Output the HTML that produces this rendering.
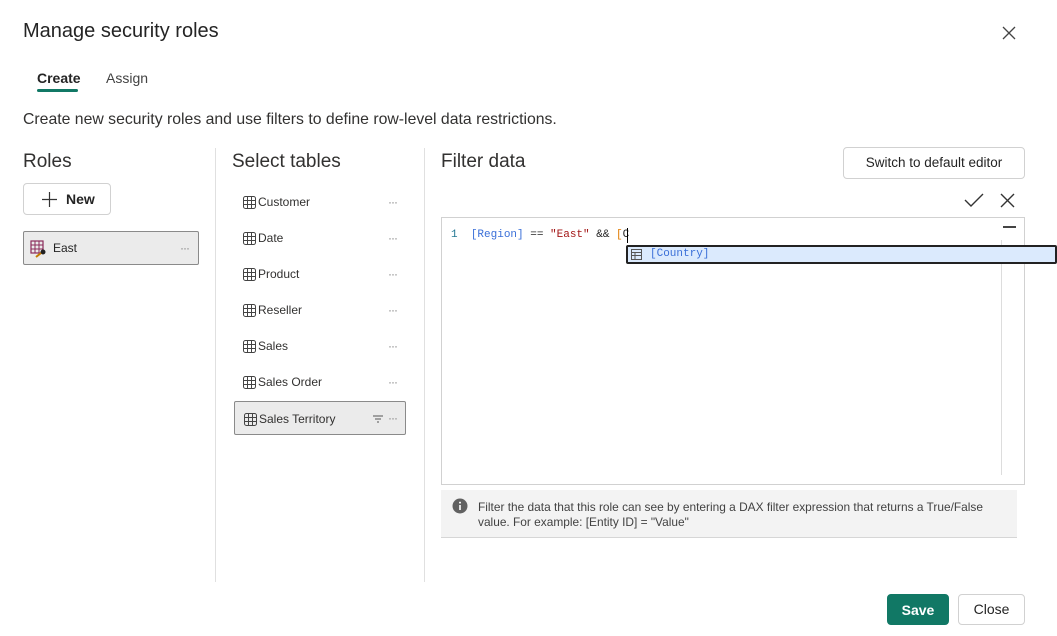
<!DOCTYPE html>
<html><head><style>
*{box-sizing:border-box;margin:0;padding:0}
body{width:1057px;height:636px;background:#fff;font-family:"Liberation Sans",sans-serif;color:#242424;position:relative;overflow:hidden}
.a{position:absolute;white-space:nowrap}
.h{font-size:19px;color:#323130}
.row{position:absolute;left:234px;width:172px;height:34px;font-size:12px;color:#323130}
.row .t{position:absolute;left:24px;top:10px}
.row .d{position:absolute;left:154px;top:10px;color:#888;font-size:12px;letter-spacing:-1px;line-height:14px}
.row svg{position:absolute;left:9px;top:11px}
.btn{position:absolute;border:1px solid #d1d1d1;border-radius:4px;background:#fff;font-size:14px;font-weight:bold;color:#242424;text-align:center}
.mono{font-family:"Liberation Mono",monospace;font-size:11px}
</style></head><body>
<div class="a" style="left:23px;top:20px;font-size:20px;color:#242424">Manage security roles</div>
<svg class="a" style="left:1002px;top:26px" width="14" height="14"><path d="M1 1L13 13M13 1L1 13" stroke="#444" stroke-width="1.3"/></svg>
<div class="a" style="left:37px;top:70px;font-size:14px;font-weight:bold;color:#242424">Create</div>
<div class="a" style="left:37px;top:89px;width:41px;height:3px;background:#117865;border-radius:2px"></div>
<div class="a" style="left:106px;top:70px;font-size:14px;color:#424242">Assign</div>
<div class="a" style="left:23px;top:111px;font-size:15.8px;color:#323130">Create new security roles and use filters to define row-level data restrictions.</div>
<div class="a" style="left:215px;top:148px;width:1px;height:434px;background:#e0e0e0"></div>
<div class="a" style="left:424px;top:148px;width:1px;height:434px;background:#e0e0e0"></div>
<div class="a h" style="left:23px;top:151px">Roles</div>
<div class="a h" style="left:232px;top:151px">Select tables</div>
<div class="a h" style="left:441px;top:151px">Filter data</div>
<div class="btn" style="left:23px;top:183px;width:88px;height:32px;line-height:30px"><svg style="position:absolute;left:18px;top:8px" width="15" height="15"><path d="M7.5 0V15M0 7.5H15" stroke="#333" stroke-width="1.2"/></svg><span style="position:absolute;left:42px;top:0">New</span></div>
<div class="a" style="left:23px;top:231px;width:176px;height:34px;background:#ebebeb;border:1px solid #8a8a8a;border-radius:2px">
<svg class="a" style="left:6px;top:8px" width="18" height="18"><rect x="1" y="1" width="12" height="12" fill="none" stroke="#8a2a5a" stroke-width="1.2"/><path d="M5 1V13M9 1V13M1 5H13M1 9H13" stroke="#8a2a5a" stroke-width="1"/><circle cx="13" cy="12" r="2.5" fill="#222"/><path d="M11 13L6 17" stroke="#c47a00" stroke-width="2"/></svg>
<span class="a" style="left:29px;top:9px;font-size:12px">East</span><span class="a" style="left:156px;top:9px;font-size:12px;color:#888;letter-spacing:-1px">···</span></div>

<div class="row" style="top:185px"><svg width="13" height="13"><rect x=".5" y=".5" width="12" height="12" rx="2" fill="none" stroke="#444"/><path d="M4.5 1V12M8.5 1V12M1 4.5H12M1 8.5H12" stroke="#444"/></svg><span class="t">Customer</span><span class="d">···</span></div>
<div class="row" style="top:221px"><svg width="13" height="13"><rect x=".5" y=".5" width="12" height="12" rx="2" fill="none" stroke="#444"/><path d="M4.5 1V12M8.5 1V12M1 4.5H12M1 8.5H12" stroke="#444"/></svg><span class="t">Date</span><span class="d">···</span></div>
<div class="row" style="top:257px"><svg width="13" height="13"><rect x=".5" y=".5" width="12" height="12" rx="2" fill="none" stroke="#444"/><path d="M4.5 1V12M8.5 1V12M1 4.5H12M1 8.5H12" stroke="#444"/></svg><span class="t">Product</span><span class="d">···</span></div>
<div class="row" style="top:293px"><svg width="13" height="13"><rect x=".5" y=".5" width="12" height="12" rx="2" fill="none" stroke="#444"/><path d="M4.5 1V12M8.5 1V12M1 4.5H12M1 8.5H12" stroke="#444"/></svg><span class="t">Reseller</span><span class="d">···</span></div>
<div class="row" style="top:329px"><svg width="13" height="13"><rect x=".5" y=".5" width="12" height="12" rx="2" fill="none" stroke="#444"/><path d="M4.5 1V12M8.5 1V12M1 4.5H12M1 8.5H12" stroke="#444"/></svg><span class="t">Sales</span><span class="d">···</span></div>
<div class="row" style="top:365px"><svg width="13" height="13"><rect x=".5" y=".5" width="12" height="12" rx="2" fill="none" stroke="#444"/><path d="M4.5 1V12M8.5 1V12M1 4.5H12M1 8.5H12" stroke="#444"/></svg><span class="t">Sales Order</span><span class="d">···</span></div>
<div class="row" style="top:401px;background:#ebebeb;border:1px solid #8a8a8a;border-radius:2px"><svg width="13" height="13"><rect x=".5" y=".5" width="12" height="12" rx="2" fill="none" stroke="#444"/><path d="M4.5 1V12M8.5 1V12M1 4.5H12M1 8.5H12" stroke="#444"/></svg><span class="t">Sales Territory</span><span class="d" style="top:9px;left:153px">···</span><svg style="left:138px;top:13px" width="10" height="8"><path d="M0 1H10M2 4H8M4 7H6" stroke="#555"/></svg></div>

<div class="btn" style="left:843px;top:147px;width:182px;height:32px;line-height:30px;font-weight:normal;font-size:13.5px">Switch to default editor</div>
<svg class="a" style="left:964px;top:192px" width="20" height="16"><path d="M1 8L7 14L19 2" fill="none" stroke="#333" stroke-width="1.4"/></svg>
<svg class="a" style="left:1000px;top:193px" width="15" height="15"><path d="M1 1L14 14M14 1L1 14" stroke="#333" stroke-width="1.4"/></svg>
<div class="a" style="left:441px;top:217px;width:584px;height:268px;border:1px solid #d1d1d1"></div>
<div class="a" style="left:1001px;top:240px;width:1px;height:235px;background:#ddd"></div>
<div class="a" style="left:1003px;top:226px;width:13px;height:2px;background:#444"></div>
<div class="a mono" style="left:451px;top:229px"><span style="color:#237893">1</span>&nbsp; <span style="color:#3a6fd8">[Region]</span> == <span style="color:#a31515">"East"</span> &amp;&amp; <span style="color:#e07b00">[</span>C</div>
<div class="a" style="left:627px;top:228px;width:1px;height:15px;background:#000"></div>
<div class="a" style="left:626px;top:245px;width:431px;height:19px;background:#dbeafd;border:2px solid #222;border-radius:2px"></div>
<svg class="a" style="left:631px;top:249px" width="11" height="11"><rect x=".5" y=".5" width="10" height="10" fill="none" stroke="#555"/><path d="M1 3.5H10M1 6.5H10M4 3.5V10" stroke="#555"/></svg>
<div class="a mono" style="left:650px;top:248px;color:#3a6fd8">[Country]</div>

<div class="a" style="left:441px;top:490px;width:576px;height:48px;background:#f3f3f3;border-bottom:1px solid #d6d6d6"></div>
<svg class="a" style="left:452px;top:498px" width="16" height="16"><circle cx="8" cy="8" r="7.5" fill="#616161"/><rect x="7.2" y="7" width="1.6" height="5" fill="#fff"/><circle cx="8" cy="4.6" r="1" fill="#fff"/></svg>
<div class="a" style="left:478px;top:500px;font-size:11.9px;color:#424242;line-height:15px">Filter the data that this role can see by entering a DAX filter expression that returns a True/False<br>value. For example: [Entity ID] = "Value"</div>

<div class="btn" style="left:887px;top:594px;width:62px;height:31px;line-height:30px;background:#117865;border-color:#117865;color:#fff">Save</div>
<div class="btn" style="left:958px;top:594px;width:67px;height:31px;line-height:29px;font-weight:normal">Close</div>
</body></html>
